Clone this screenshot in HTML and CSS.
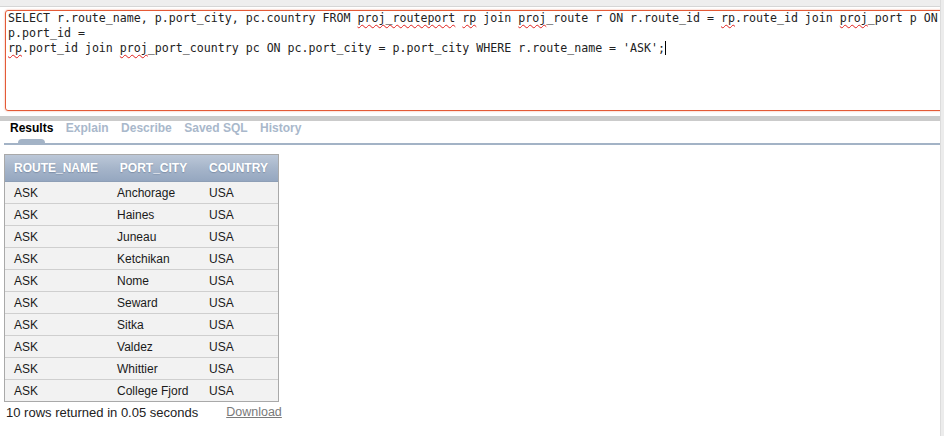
FILE: index.html
```html
<!DOCTYPE html>
<html>
<head>
<meta charset="utf-8">
<link rel="stylesheet" href="styles.css">
</head>
<body>
<div class="page">
  <div class="main">
    <div class="topband"></div>
    <div class="editor-wrap">
      <div class="editor">
        <div class="line">SELECT r.route_name, p.port_city, pc.country FROM <span class="sp">proj_routeport</span> <span class="sp">rp</span> join <span class="sp">proj</span>_route r ON r.route_id = <span class="sp">rp</span>.route_id join <span class="sp">proj</span>_port p ON</div>
        <div class="line">p.port_id =</div>
        <div class="line"><span class="sp">rp</span>.port_id join <span class="sp">proj</span>_port_country pc ON pc.port_city = p.port_city WHERE r.route_name = 'ASK';<span class="caret"></span></div>
      </div>
    </div>
    <div class="grip"></div>
    <div class="tabs">
      <div class="tab active"><span>Results</span><span class="tab-mark"></span></div>
      <div class="tab"><span>Explain</span></div>
      <div class="tab"><span>Describe</span></div>
      <div class="tab"><span>Saved SQL</span></div>
      <div class="tab"><span>History</span></div>
    </div>
    <table class="results">
      <thead>
        <tr><th class="c1">ROUTE_NAME</th><th class="c2">PORT_CITY</th><th class="c3">COUNTRY</th></tr>
      </thead>
      <tbody>
        <tr><td>ASK</td><td>Anchorage</td><td>USA</td></tr>
        <tr><td>ASK</td><td>Haines</td><td>USA</td></tr>
        <tr><td>ASK</td><td>Juneau</td><td>USA</td></tr>
        <tr><td>ASK</td><td>Ketchikan</td><td>USA</td></tr>
        <tr><td>ASK</td><td>Nome</td><td>USA</td></tr>
        <tr><td>ASK</td><td>Seward</td><td>USA</td></tr>
        <tr><td>ASK</td><td>Sitka</td><td>USA</td></tr>
        <tr><td>ASK</td><td>Valdez</td><td>USA</td></tr>
        <tr><td>ASK</td><td>Whittier</td><td>USA</td></tr>
        <tr><td>ASK</td><td>College Fjord</td><td>USA</td></tr>
      </tbody>
    </table>
    <div class="footer">
      <span>10 rows returned in 0.05 seconds</span>
      <span class="download">Download</span>
    </div>
  </div>
  <div class="scrollbar"></div>
</div>
</body>
</html>
```
FILE: styles.css
```css
html, body {
  margin: 0;
  padding: 0;
  background: #ffffff;
}
body {
  font-family: "Liberation Sans", Arial, sans-serif;
  color: #222;
}
.page {
  display: flex;
  width: 944px;
  height: 436px;
  overflow: hidden;
}
.main {
  width: 940px;
  flex: none;
  overflow: hidden;
}
.scrollbar {
  flex: 1;
  background: #ececec;
  border-left: 1px solid #dcdcdc;
}
.topband {
  height: 6px;
  background: #eeeeee;
  border-bottom: 1px solid #d6d6d6;
}
.editor-wrap {
  padding: 3px 0 0 5px;
}
.editor {
  width: 1000px;
  height: 99px;
  border: 1px solid #e45a36;
  border-radius: 3px;
  box-shadow: 0 0 2px rgba(230, 100, 60, 0.6);
  padding: 0 2px;
  font-family: "DejaVu Sans Mono", monospace;
  font-size: 11.62px;
  line-height: 15px;
  color: #222;
}
.line {
  white-space: pre;
}
.sp {
  text-decoration: underline wavy #e0201c;
  text-decoration-thickness: 1px;
  text-underline-offset: 2px;
}
.caret {
  display: inline-block;
  width: 1px;
  height: 14px;
  background: #000;
  vertical-align: -3px;
}
.grip {
  margin-top: 5px;
  height: 5px;
  background: #cbcbcb;
}
.tabs {
  display: flex;
  gap: 12.5px;
  margin-left: 4px;
  padding-left: 6px;
  border-bottom: 2px solid #a3b3c6;
}
.tab {
  display: flex;
  flex-direction: column;
  align-items: center;
  font-size: 12px;
  font-weight: bold;
  line-height: 14px;
  color: #a9b8cb;
}
.tab.active {
  color: #000;
}
.tab-mark {
  width: 27px;
  height: 4px;
  margin-top: 4px;
  background: #a3b3c6;
  border-radius: 4px 4px 0 0;
}
.results {
  margin: 9px 0 0 4px;
  border-collapse: separate;
  border-spacing: 0;
  border: 1px solid #a9a9a9;
  font-size: 12px;
}
.results th {
  height: 26px;
  padding: 0 10px 0 9px;
  text-align: center;
  vertical-align: middle;
  color: #fff;
  font-weight: bold;
  text-shadow: 0 1px 1px rgba(60, 80, 110, 0.35);
  background: linear-gradient(to bottom, #bcc8d8 0%, #a6b5ca 50%, #95a7c0 100%);
  white-space: nowrap;
}
.results th.c1 {
  width: 84px;
}
.results th.c2 {
  width: 73px;
}
.results th.c3 {
  width: 58px;
}
.results td {
  height: 21px;
  padding: 0 10px 0 9px;
  border-top: 1px solid #cfcfcf;
  background: #f2f2f2;
  color: #1a1a1a;
  vertical-align: middle;
  white-space: nowrap;
}
.results tbody tr:first-child td {
  border-top-color: #8e9fb6;
}
.footer {
  display: flex;
  margin: 3px 0 0 6px;
  font-size: 13px;
  line-height: 15px;
  color: #222;
}
.download {
  margin-left: 28px;
  font-size: 12.5px;
  color: #7a7a7a;
  text-decoration: underline;
}
```
